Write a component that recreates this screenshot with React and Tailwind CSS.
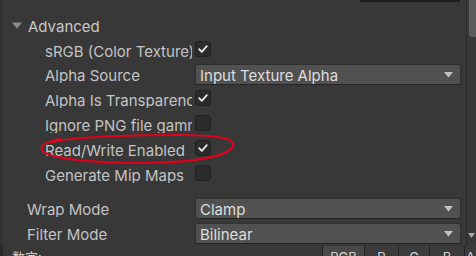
import React from "react";

function Check() {
  return (
    <svg width="12" height="12" viewBox="0 0 12 12">
      <path d="M2.2 6.2 L4.8 8.8 L9.8 3.2" fill="none" stroke="#e8e8e8" strokeWidth="1.8" strokeLinecap="round" strokeLinejoin="round" />
    </svg>
  );
}

function Checkbox({ checked }) {
  return (
    <div className="w-[16px] h-[16px] self-start mt-[3px] rounded-[3px] bg-[#2b2b2b] border border-[#212121] flex items-center justify-center">
      {checked ? <Check /> : null}
    </div>
  );
}

function Arrow() {
  return (
    <svg width="9" height="6" viewBox="0 0 9 6">
      <path d="M0 0 H9 L4.5 5.5 Z" fill="#c2c2c2" />
    </svg>
  );
}

function Dropdown({ value }) {
  return (
    <div className="w-[266px] h-[21px] rounded-[3px] bg-[#515151] border border-[#303030] border-b-[#252525] flex items-center pl-[4px] pr-[7px] text-[#dedede]">
      <span className="flex-1 pt-px">{value}</span>
      <Arrow />
    </div>
  );
}

function Row({ label, indent, children }) {
  return (
    <div className="h-[25px] flex items-center">
      <div
        className={
          indent
            ? "ml-[42px] w-[147px] mr-[3px] pt-[2px] overflow-hidden whitespace-nowrap text-[#c4c4c4]"
            : "ml-[24px] w-[165px] mr-[3px] pt-[2px] overflow-hidden whitespace-nowrap text-[#c4c4c4]"
        }
      >
        {label}
      </div>
      {children}
    </div>
  );
}

export default function App() {
  return (
    <div className="relative w-[476px] h-[256px] bg-[#383838] flex flex-col overflow-hidden font-['Inter',sans-serif] text-[15px] leading-none">
      <div className="flex h-[246px]">
        <div className="w-[3px] bg-[#323232]" />
        <div className="flex-1 flex flex-col">
          <div className="h-[2px] ml-[357px] w-[100px] bg-[#1e1e1e]" />
          <div className="h-[11px]" />
          <div className="h-[25px] flex items-center">
            <svg className="ml-[9px] mr-[6px]" width="10" height="7" viewBox="0 0 10 7">
              <path d="M0 0.5 H10 L5 6.5 Z" fill="#8c8c8c" />
            </svg>
            <span className="text-[#c8c8c8] text-[15px] pt-[2px]">Advanced</span>
          </div>
          <Row label="sRGB (Color Texture)" indent>
            <Checkbox checked />
          </Row>
          <Row label="Alpha Source" indent>
            <Dropdown value="Input Texture Alpha" />
          </Row>
          <Row label="Alpha Is Transparency" indent>
            <Checkbox checked />
          </Row>
          <Row label="Ignore PNG file gamma" indent>
            <Checkbox />
          </Row>
          <Row label="Read/Write Enabled" indent>
            <Checkbox checked />
          </Row>
          <Row label="Generate Mip Maps" indent>
            <Checkbox />
          </Row>
          <div className="h-[10px]" />
          <Row label="Wrap Mode">
            <Dropdown value="Clamp" />
          </Row>
          <Row label="Filter Mode">
            <Dropdown value="Bilinear" />
          </Row>
        </div>
        <div className="w-px bg-[#2a2a2a]" />
        <div className="w-[9px] flex flex-col items-end">
          <div className="w-[7px] h-[37px] bg-[#5c5c5c] rounded-bl-[3px]" />
          <div className="flex-1" />
          <svg className="mr-[1px] mb-[8px]" width="7" height="5" viewBox="0 0 7 5">
            <path d="M0 0 H7 L3.5 5 Z" fill="#a8a8a8" />
          </svg>
        </div>
      </div>
      <div className="h-px bg-[#232323]" />
      <div className="flex flex-1 text-[13px] text-[#d0d0d0]">
        <div className="w-[3px] bg-[#2a2a2a]" />
        <div className="w-[319px] pl-[9px] pt-[4px] font-['Noto_Sans_CJK_SC',sans-serif]">数字:</div>
        <div className="w-px bg-[#232323]" />
        <div className="w-[41px] bg-[#484848] flex justify-center pt-[5px]">RGB</div>
        <div className="w-px bg-[#232323]" />
        <div className="w-[33px] bg-[#3b3b3b] flex justify-center pt-[5px]">R</div>
        <div className="w-px bg-[#232323]" />
        <div className="w-[30px] bg-[#3b3b3b] flex justify-center pt-[5px]">G</div>
        <div className="w-px bg-[#232323]" />
        <div className="w-[34px] bg-[#3b3b3b] flex justify-center pt-[5px]">B</div>
        <div className="w-px bg-[#232323]" />
        <div className="flex-1 bg-[#3b3b3b] flex justify-center pt-[5px]">A</div>
      </div>
      <svg className="absolute left-0 top-0 pointer-events-none" width="476" height="256" viewBox="0 0 476 256">
        <path
          d="M60 139 C48 141, 40 145, 42 150 C46 158, 90 163, 140 163 C190 163, 228 157, 233 146 C236 138, 215 135, 180 135 C130 135, 80 136, 52 142"
          fill="none"
          stroke="#e3001b"
          strokeWidth="2.2"
          strokeLinecap="round"
        />
      </svg>
    </div>
  );
}
